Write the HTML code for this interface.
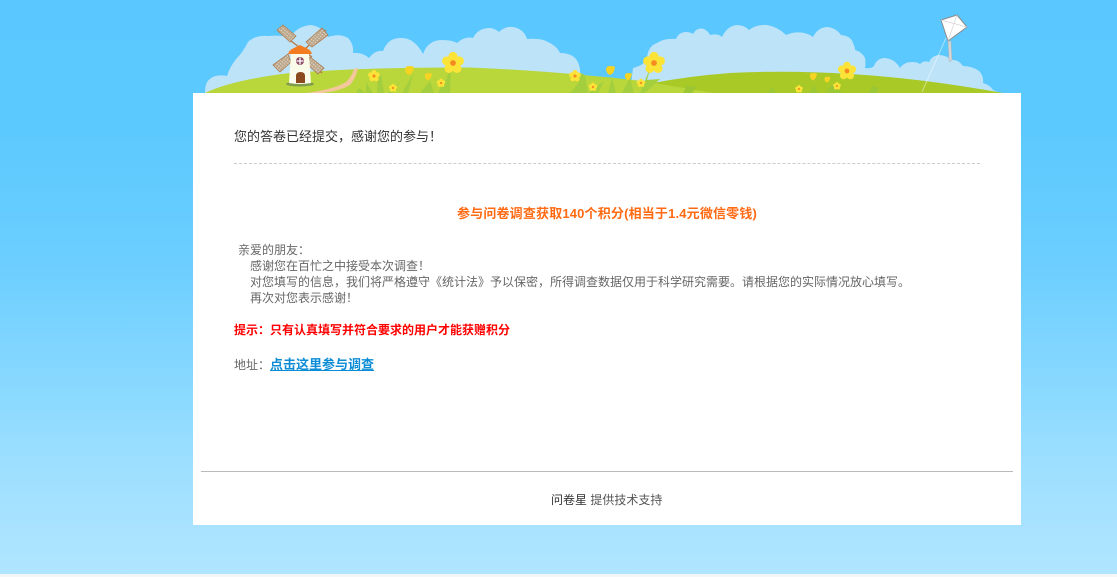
<!DOCTYPE html>
<html lang="zh"><head><meta charset="utf-8"><title>问卷星</title>
<style>
html,body{margin:0;padding:0;background:#f4f6f7}
body{width:1117px;height:577px;overflow:hidden;position:relative;font-family:"Liberation Sans","Noto Sans CJK SC",sans-serif;font-size:12px;color:#666}
#bg{position:absolute;left:0;top:0;width:1117px;height:574px;background:linear-gradient(180deg,#5ac8fe 0,#5cc9fe 130px,#6bceff 260px,#84d7ff 370px,#9cdfff 460px,#b0e5ff 574px)}
#scene{position:absolute;left:0;top:0}
#detail{filter:blur(.35px)}
#box{position:absolute;left:193px;top:93px;width:828px;height:432px;background:#fff}
.t{position:absolute;white-space:nowrap;line-height:16px}
.dash{position:absolute;left:234px;top:163px;width:746px;border-top:1px dashed #ccc}
.hr{position:absolute;left:201px;top:471px;width:812px;height:1px;background:#bbb}
a{color:#0a8cd6;text-decoration:underline}
</style></head><body>
<div id="bg"></div>
<svg id="scene" width="1117" height="93" viewBox="0 0 1117 93">
<defs>
<g id="fl"><g fill="#fbe337"><circle cx="0" cy="-5.5" r="3.8"/><circle cx="5.3" cy="-1.7" r="3.8"/><circle cx="3.3" cy="4.5" r="3.8"/><circle cx="-3.3" cy="4.5" r="3.8"/><circle cx="-5.3" cy="-1.7" r="3.8"/></g><circle r="2.4" fill="#f58a1f"/></g>
<g id="tu"><path d="M-4-1Q-4-5 0-5T5-4Q4 3 0 4Q-3 3-4-1Z" fill="#f7d322"/></g>
<pattern id="lat" width="2.600" height="2.600" patternUnits="userSpaceOnUse" patternTransform="rotate(40)"><rect width="2.600" height="2.600" fill="#b9a184"/><rect x=".5" y=".5" width="1.500" height="1.500" fill="#dcd3c3"/></pattern>
</defs>
<g id="detail">
<path d="M205 93Q205 82 210 79Q215 74 227 76Q230 66 237 58Q243 52 248 42Q255 35 268 36Q280 35 291 37Q296 27 310 25Q322 26 328 37Q340 33 348 38Q354 44 353 53Q362 52 369 58Q375 50 383 51Q388 38 400 38Q414 37 423 54Q428 40 442 40Q452 40 457 43Q465 36 473 38Q478 28 490 28Q496 29 499 32Q505 26 513 27Q524 29 527 39Q541 38 548 42Q557 46 560 53Q571 53 576 59Q581 66 580 75L600 93Z" fill="#bde3f8"/>
<path d="M630 93L633 68Q645 65 647 58Q648 46 657 43Q664 38 676 39Q679 32 686 32Q690 32 693 34Q697 27 704 29Q708 31 710 35Q718 33 722 37Q727 26 737 25Q744 25 749 30Q757 24 767 25Q778 27 786 35Q795 31 804 33Q809 34 813 37Q818 27 828 27Q836 28 841 35Q851 36 853 43Q855 47 855 50Q862 52 865 58Q866 63 865 68Q871 69 874 66Q877 58 885 58Q895 59 900 68Q904 62 912 62Q917 62 920 64Q924 60 929 62Q932 55 940 55Q948 56 951 60Q958 59 963 66Q972 66 979 71Q984 76 983 83Q990 85 993 90L1000 93Z" fill="#bde3f8"/>
<path d="M205 93Q232 80 290 73Q370 67 470 67.500Q530 70 582 75Q650 80 713 93Z" fill="#b9d63b"/>
<path d="M653 83Q690 76 730 73Q790 70 850 74Q920 78 1003 93H713Q680 87 653 83Z" fill="#a9c926"/>
<path d="M306 93Q335 89 346 82Q352 76 354 69L358 68Q356 78 350 85Q340 91 322 93Z" fill="#f3c79b"/>
<g fill="#a3cf3e">
<path d="M366 82L373 93H377L378 74L381 74L384 93H388L400 82L392 93H402L413 74L408 93H420L430 81L434 93H438L446 80L451 66L450 93H356L359 88L366 93Z"/>
<path d="M570 93L578 84L581 73L585 75L588 93L604 81L598 93H608L612 78L616 93H622L630 77L634 93H640L651 66L647 80L660 79L645 93Z"/>
</g>
<path d="M683 93L687 85L690 87L697 86L692 93Z M767 93L772 87L776 93Z M809 93L814 85L818 93Z M826 93L832 84L838 87L842 93Z M869 93L872 86L879 88L877 93Z" fill="#9cc735"/>
<use href="#fl" transform="translate(453 63) scale(1.2)"/><use href="#fl" transform="translate(654 63) scale(1.2)"/>
<use href="#fl" transform="translate(847 71)"/>
<use href="#fl" transform="translate(374 76) scale(.65)"/>
<use href="#fl" transform="translate(393 88) scale(.45)"/>
<use href="#fl" transform="translate(441 83) scale(.47)"/>
<use href="#fl" transform="translate(575 76) scale(.65)"/>
<use href="#fl" transform="translate(593 87) scale(.47)"/>
<use href="#fl" transform="translate(641 83) scale(.47)"/>
<use href="#fl" transform="translate(799 89) scale(.42)"/>
<use href="#fl" transform="translate(837 86) scale(.42)"/>
<use href="#tu" x="409" y="71"/><use href="#tu" transform="translate(428 77) scale(.8)"/>
<use href="#tu" x="610" y="71"/><use href="#tu" transform="translate(628 77) scale(.8)"/>
<use href="#tu" transform="translate(813 77) scale(.8)"/><use href="#tu" transform="translate(827 80) scale(.65)"/>
<g>
<path d="M278 31L312 57M326 30L286 66M322 73L298 53" stroke="#b97b45" stroke-width="1.400" fill="none"/>
<path d="M277 30L283 25L296 36L290 42Z M322 28L328 35L312 47L306 42Z M273 65L288 54L291 62L280 72Z M310 57L324 68L318 74L308 65Z" fill="url(#lat)" stroke="#ad7c50" stroke-width=".8"/>
<ellipse cx="300" cy="84" rx="14" ry="2.500" fill="#7e9b50"/>
<path d="M291 54H309L311 83Q300 85 289 83Z" fill="#fbfbe9"/>
<path d="M288 54Q289 50 294 48L300 45L306 48Q311 50 312 54Z" fill="#f47c20"/>
<circle cx="300" cy="61" r="4" fill="#8e4b66"/>
<path d="M300 57.500V64.500M296.500 61H303.500" stroke="#fff" stroke-width="1.300"/>
<path d="M296 83V76Q296 72 300.500 72T305 76V83Z" fill="#8a4a1d"/>
</g>
<g>
<path d="M946 38L922 92" stroke="#fff" stroke-opacity=".45" stroke-width="1" fill="none"/>
<path d="M948 41H951L952 60L950 62L949 60Z" fill="#d3d6d8" stroke="#a9acae" stroke-width=".5"/>
<path d="M941 20L957 15L967 27L948 41Z" fill="#fff" stroke="#8b8b8b" stroke-width="1"/>
<path d="M941 20L967 27M957 15L948 41" stroke="#d5d5d5" stroke-width=".7"/>
</g>
</g>
</svg>
<div id="box"></div>
<div class="t" style="left:234px;top:129px;font-size:13px;color:#333">您的答卷已经提交，感谢您的参与！</div>
<div class="dash"></div>
<div class="t" style="left:457px;top:206px;font-size:13px;font-weight:bold;color:#ff6a13;letter-spacing:.17px">参与问卷调查获取140个积分(相当于1.4元微信零钱)</div>
<div class="t" style="left:238px;top:242px">亲爱的朋友：</div>
<div class="t" style="left:250px;top:258px">感谢您在百忙之中接受本次调查！</div>
<div class="t" style="left:250px;top:274px">对您填写的信息，我们将严格遵守《统计法》予以保密，所得调查数据仅用于科学研究需要。请根据您的实际情况放心填写。</div>
<div class="t" style="left:250px;top:290px">再次对您表示感谢！</div>
<div class="t" style="left:234px;top:322px;font-weight:bold;color:#f00">提示：只有认真填写并符合要求的用户才能获赠积分</div>
<div class="t" style="left:234px;top:357px">地址：</div>
<div class="t" style="left:270px;top:357px;font-size:13px;font-weight:bold"><a href="#">点击这里参与调查</a></div>
<div class="hr"></div>
<div class="t" style="left:551px;top:492px;color:#333">问卷星 <span style="color:#555">提供技术支持</span></div>
</body></html>
